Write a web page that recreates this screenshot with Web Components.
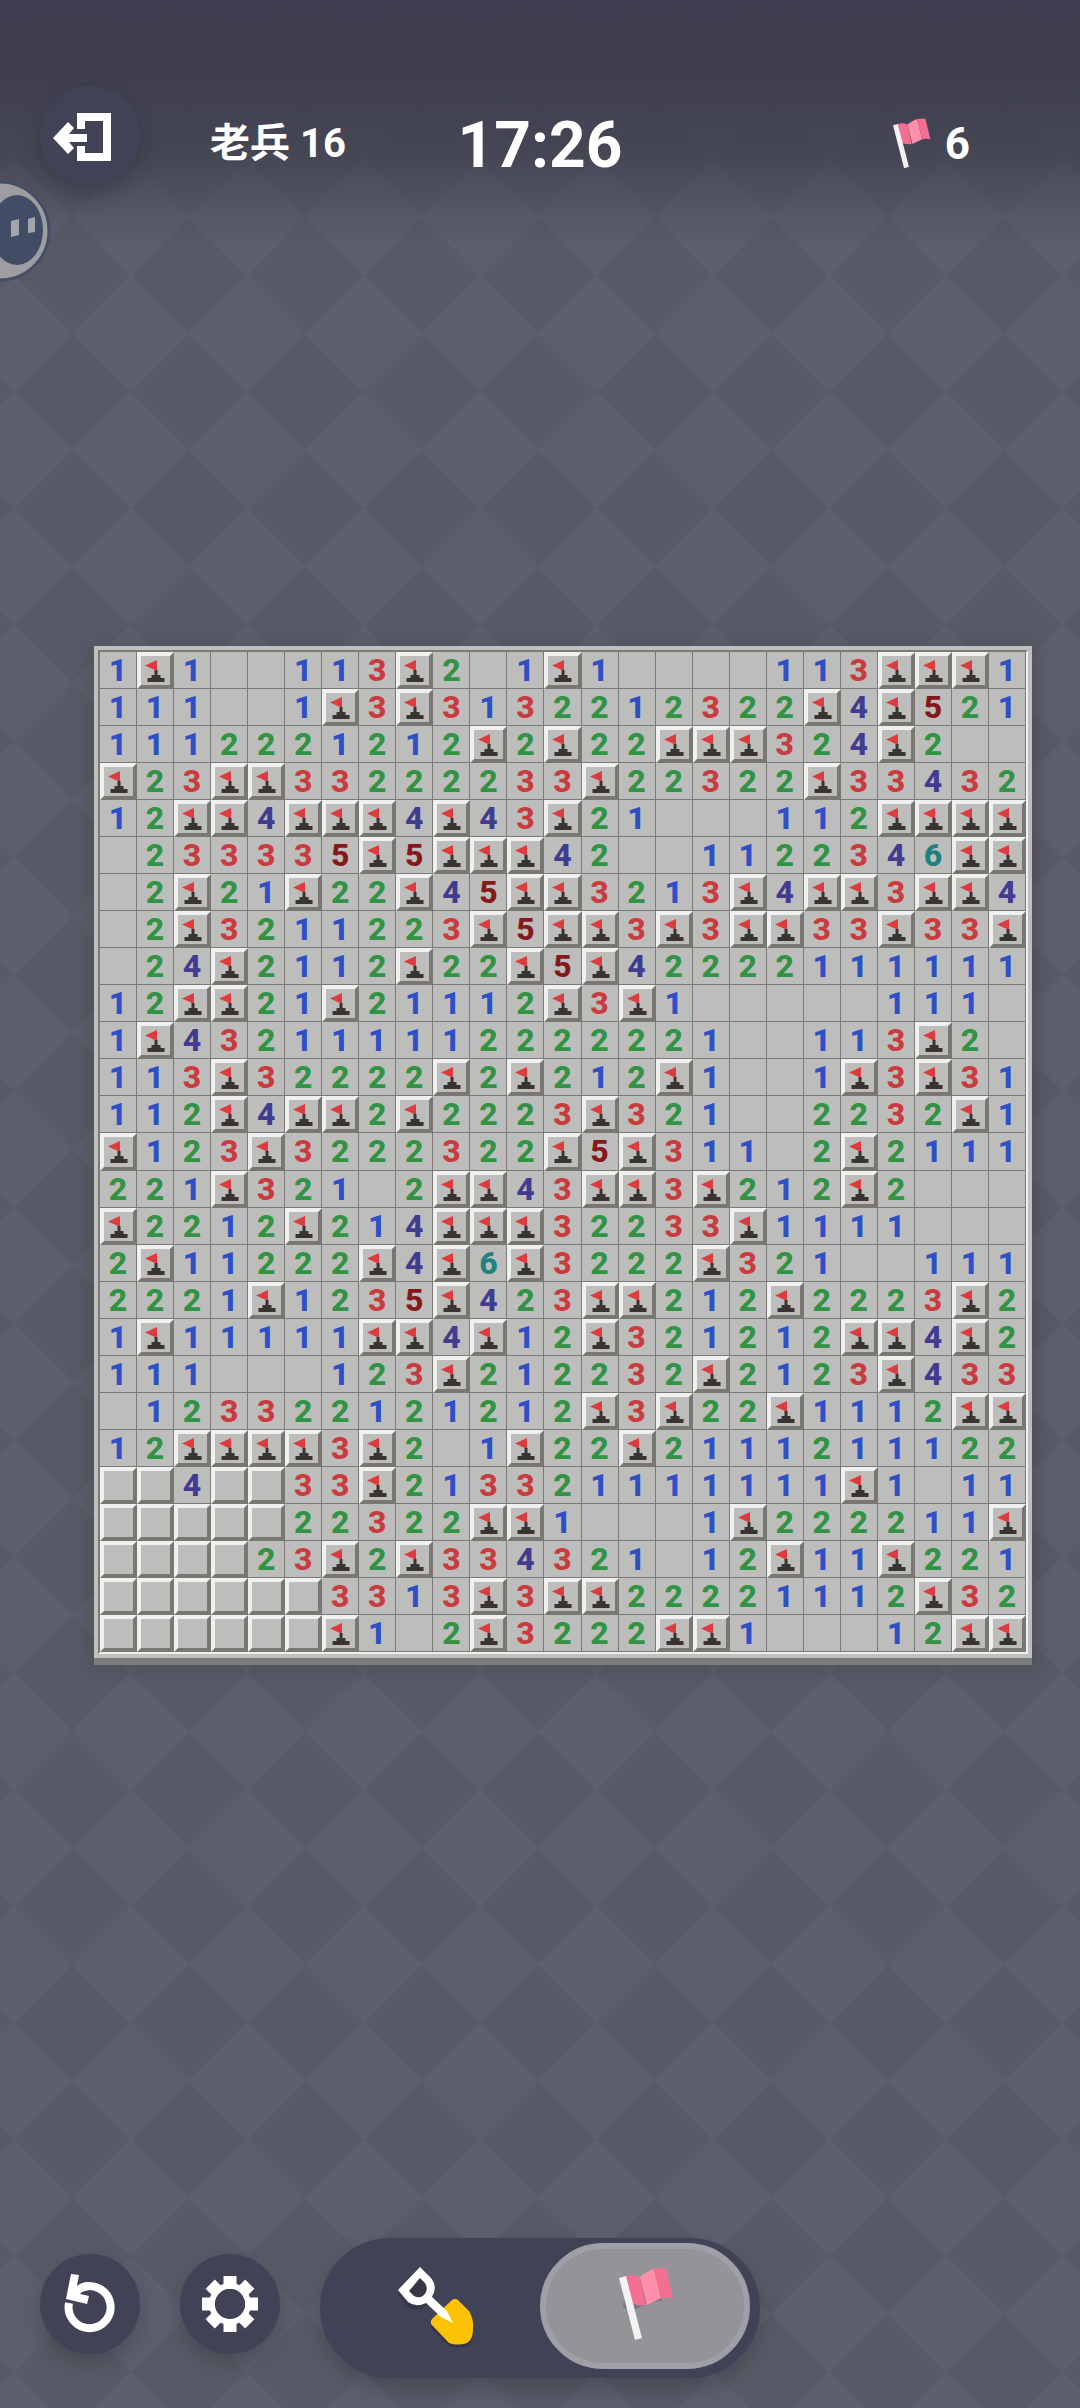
<!DOCTYPE html>
<html lang="zh">
<head>
<meta charset="utf-8">
<meta name="viewport" content="width=device-width, initial-scale=1">
<title>扫雷</title>
<style>
html, body { margin: 0; height: 100%; }
body {
  background-color: #5d5f6e;
  font-family: "Roboto", "Noto Sans CJK SC", sans-serif;
  font-weight: 700;
  color: #fff;
}
</style>
</head>
<body>
<ms-game>
  <ms-header slot="header">
    <span slot="level">老兵 16</span>
    <time slot="time">17:26</time>
    <span slot="mines">6</span>
  </ms-header>
  <ms-board></ms-board>
  <ms-toolbar slot="footer"></ms-toolbar>
</ms-game>
<script>
const pennant = `
  <path d="M6 10 L12 8 L26 60 L20 62Z" fill="#5a5a62" opacity=".35" transform="translate(0 3)"/>
  <path d="M13 10q7-1 13 1 7-5 16-8l6 29q-8 0-13 1-7 4-12 7-8 0-14-1z" fill="#4a4a55" opacity=".35" transform="translate(0 3)"/>
  <path d="M12 10q8-2 14 1l6 28q-6 1-13-1z" fill="#f26f92"/>
  <path d="M26 11q7-6 14-8l7 29q-8 4-14 7z" fill="#ff8fab"/>
  <path d="M40 3q7-2 12 0l7 29q-6-1-12 0z" fill="#f26f92"/>
  <path d="M5 12l7-2 16 62-7 2z" fill="#f3f2f3"/>`;

class MsGame extends HTMLElement {
  constructor() {
    super();
    const dark = [[58.25, 58.25], [174.75, 58.25], [58.25, 174.75], [174.75, 174.75]]
      .map(([x, y]) => `M${x} ${y - 58}L${x + 58} ${y}L${x} ${y + 58}L${x - 58} ${y}Z`).join('');
    const tile = encodeURIComponent(`<svg xmlns="http://www.w3.org/2000/svg" viewBox="0 0 233 233"><path d="${dark}" fill="#585a67"/></svg>`);
    this.attachShadow({ mode: 'open' }).innerHTML = `
      <style>
        :host { display: flex; flex-direction: column; min-height: 100vh; overflow: hidden;
          background: url("data:image/svg+xml,${tile}") 14px -16px / 233px 233px #5d5f6e; }
        main { flex: 1; display: flex; flex-direction: column; justify-content: center; padding: 0 48px 194px 94px; }
      </style>
      <slot name="header"></slot>
      <main><slot></slot></main>
      <slot name="footer"></slot>`;
  }
}

class MsHeader extends HTMLElement {
  constructor() {
    super();
    this.attachShadow({ mode: 'open' }).innerHTML = `
      <style>
        :host { display: block; position: relative; height: 260px; box-sizing: border-box; padding: 86px 40px 0;
          background: linear-gradient(#3c3c4ef5, #3d3d4eee 80px, #40404fcc 150px, #44445366 200px, #44445300 250px); }
        .bar { display: grid; grid-template-columns: 1fr auto 1fr; align-items: center; }
        .left { display: flex; align-items: center; gap: 70px; }
        button { width: 100px; height: 100px; padding: 0; border: 0; border-radius: 50%; background: #424257;
          display: grid; place-items: center; box-shadow: 0 10px 24px #0003; flex: none; }
        .level { font-size: 40px; line-height: 56px; padding-top: 16px; white-space: nowrap; }
        .time { font-size: 64px; line-height: 80px; padding-top: 20px; text-align: center; white-space: nowrap; }
        .mines { display: flex; align-items: center; gap: 12px; justify-content: flex-end; font-size: 44px; line-height: 56px; padding: 16px 70px 0 0; }
        .mines svg { width: 44px; height: 54px; }
        .pet { position: absolute; left: 0; top: 180px; width: 51px; height: 102px; }
      </style>
      <div class="bar">
        <div class="left">
          <button aria-label="退出"><svg width="74" height="50" viewBox="53 111 74 50" fill="#fff"><path d="M77 113h34v48H77V146h8v7h18V121H85v8h-8z"/><path d="M53 138L68 122l6 6-5 6h18v8H69l5 6-6 6z"/></svg></button>
          <div class="level"><slot name="level"></slot></div>
        </div>
        <div class="time"><slot name="time"></slot></div>
        <div class="mines"><svg viewBox="0 0 62 78">${pennant}</svg><slot name="mines"></slot></div>
      </div>
      <svg class="pet" viewBox="0 0 51 102">
        <circle cx="0" cy="51" r="49" fill="#9d9da2" stroke="#454e66" stroke-width="3"/>
        <ellipse cx="17" cy="50" rx="26" ry="35" fill="#424c66"/>
        <path d="M11 41l8-2v16l-8 2zM28 39l7-2v15l-7 1z" fill="#a3a5ac"/>
      </svg>`;
  }
}

const FIELD = [
  '1F1..113F2.1F1....113FFF1', '111..1F3F3132212322F4F521', '1112221212F2F22FFF324F2..',
  'F23FF33222233F22322F33432', '12FF4FFF4F43F21...112FFFF', '.233335F5FFF42..1122346FF',
  '.2F21F22F45FF3213F4FF3FF4', '.2F3211223F5FF3F3FF33F33F', '.24F2112F22F5F42222111111',
  '12FF21F21112F3F1.....111.', '1F432111112222221..113F2.', '113F32222F2F212F1..1F3F31',
  '112F4FF2F2223F321..2232F1', 'F123F3222322F5F311.2F2111', '221F321.2FF43FF3F212F2...',
  'F2212F214FFF32233F1111...', '2F11222F4F6F3222F321..111', '2221F1235F423FF212F2223F2',
  '1F11111FF4F12F321212FF4F2', '111...123F212232F2123F433', '.123322121212F3F22F1112FF',
  '12FFFF3F2.1F22F2111211122', '##4##33F213321111111F1.11', '#####22322FF1...1F222211F',
  '####23F2F334321.12F11F221', '######3313F3FF22221112F32', '######F1.2F3222FF1...12FF'
];

class MsBoard extends HTMLElement {
  constructor() {
    super();
    const flag = '<svg viewBox="0 0 29 29" aria-hidden="true"><path d="M4 9.500L16 4V15z" fill="#dd3b3e"/><path d="M13.500 14h3v5h3v3h4v4h-17v-4h4v-3h3z" fill="#393331"/></svg>';
    const cells = FIELD.map((row, r) => [...row].map((c, i) => {
      if (c === 'F') return `<button aria-label="旗 ${r + 1},${i + 1}">${flag}</button>`;
      if (c === '#') return `<button aria-label="未翻开 ${r + 1},${i + 1}"></button>`;
      return c === '.' ? '<span></span>' : `<span class="n${c}">${c}</span>`;
    }).join('')).join('');
    this.attachShadow({ mode: 'open' }).innerHTML = `
      <style>
        :host { display: block; border: 4px solid #bfc0be; background: #bfc0be; box-shadow: 0 7px 0 #7b7d7c, 0 6px 20px 6px #0002; }
        .grid { display: grid; grid-template-columns: repeat(25, minmax(0, 1fr)); grid-template-rows: repeat(27, minmax(0, 1fr)); aspect-ratio: 25 / 27;
          border: 2px solid; border-color: #7d7b78 #f0f0ee #f0f0ee #7d7b78;
          font-weight: 800; font-size: 32px; line-height: 37px; text-align: center; }
        span { background: #bdbebc; border: solid #7b7876; border-width: 0 1px 1px 0; overflow: hidden; }
        button { padding: 0; margin: 0; border: 4px solid; border-color: #f0f0ee #7a7674 #7a7674 #f0f0ee; background: #bdbebc; border-radius: 0; display: block; min-width: 0; }
        svg { display: block; width: 100%; height: 100%; }
        .n1 { color: #2f4fc6; } .n2 { color: #319343; } .n3 { color: #c93b3e; }
        .n4 { color: #423c90; } .n5 { color: #86181b; } .n6 { color: #1d8280; }
      </style>
      <div class="grid">${cells}</div>`;
  }
}

class MsToolbar extends HTMLElement {
  constructor() {
    super();
    const teeth = [0, 45, 90, 135, 180, 225, 270, 315].map(a => `<path d="M-6.500 -28h13v12h-13z" transform="rotate(${a})"/>`).join('');
    this.attachShadow({ mode: 'open' }).innerHTML = `
      <style>
        :host { display: flex; align-items: center; gap: 40px; padding: 0 40px 30px; }
        button { padding: 0; border: 0; display: grid; place-items: center; }
        .round { width: 100px; height: 100px; border-radius: 50%; background: #424257; box-shadow: 0 10px 24px #0003; margin-bottom: 8px; }
        .modes { display: flex; justify-content: space-between; box-sizing: border-box; width: 440px; height: 140px; padding: 5px 10px 9px 10px; border-radius: 70px; background: #424257; box-shadow: 0 10px 24px #0003; }
        .modes button { width: 210px; height: 126px; border-radius: 63px; background: none; }
        .modes .on { background: #939398; border: 6px solid #9f9fa7; }
      </style>
      <button class="round" aria-label="重新开始"><svg width="60" height="60" viewBox="0 0 60 60"><path d="M9 29A21 21 0 1 0 21 14" fill="none" stroke="#fff" stroke-width="8"/><path d="M11 0l8 1-2 11q5-4 13-4v8q-7 0-10 4l9 2-2 8-21-5z" fill="#fff"/></svg></button>
      <button class="round" aria-label="设置"><svg width="60" height="60" viewBox="-30 -30 60 60" fill="#fff"><circle r="18" fill="none" stroke="#fff" stroke-width="6"/>${teeth}<circle r="15" fill="#424257"/></svg></button>
      <div class="modes">
        <button aria-label="挖掘" aria-pressed="false"><svg width="80" height="82" viewBox="0 0 80 82">
          <g transform="translate(0 4)" fill="#2f2f40" opacity=".6"><path d="M3 26L25 4l10 11q6 9-1 20-12 10-21 3z"/><path d="M36 59q-1-3 1-5l20-19q3-2 6 0l11 11q5 8 4 19 0 9-6 13-10 3-18 0z"/></g>
          <path d="M36 59q-1-3 1-5l20-19q3-2 6 0l11 11q5 8 4 19 0 9-6 13-10 3-18 0z" fill="#fdc204"/>
          <path d="M3 25L25 2l11 11q7 9 1 19l15 14 6 12-12-6-15-14q-10 5-18-1zM14 26l5 5q6 3 10-1 5-5 1-12l-5-5z" fill="#fff" fill-rule="evenodd"/></svg></button>
        <button class="on" aria-label="插旗" aria-pressed="true"><svg width="62" height="80" viewBox="0 0 62 80">${pennant}</svg></button>
      </div>`;
  }
}

customElements.define('ms-game', MsGame);
customElements.define('ms-header', MsHeader);
customElements.define('ms-board', MsBoard);
customElements.define('ms-toolbar', MsToolbar);
</script>
</body>
</html>
